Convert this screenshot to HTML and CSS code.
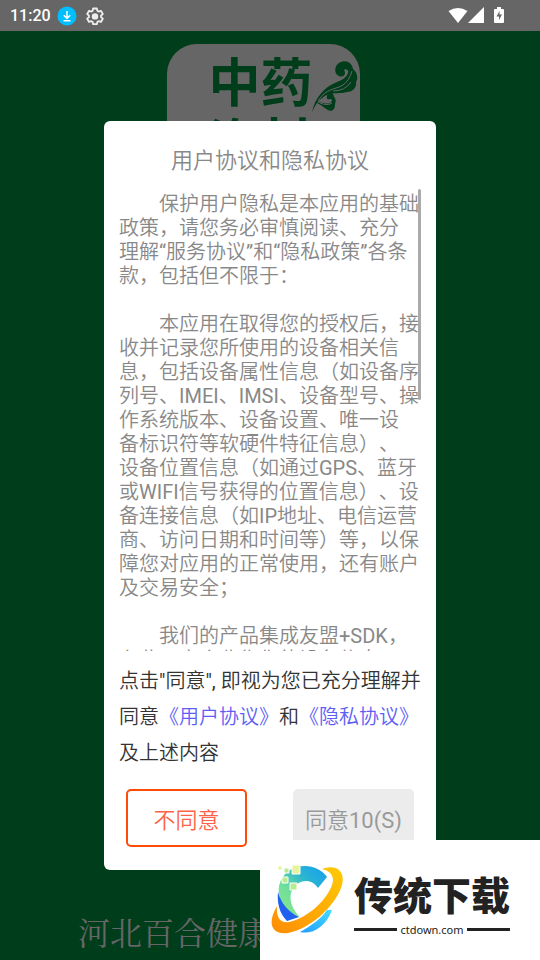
FILE: index.html
```html
<!DOCTYPE html>
<html lang="zh-CN">
<head>
    <meta charset="UTF-8">
    <meta name="viewport" content="width=device-width, initial-scale=1.0">
    <title>用户协议和隐私协议</title>
    <link rel="stylesheet" href="styles.css">
</head>
<body>

    <header class="status-bar">
        <span class="clock">11:20</span>
        <svg class="status-icon" width="20" height="20" viewBox="0 0 20 20" aria-hidden="true">
            <circle cx="10" cy="10" r="9.5" fill="#00bfff"/>
            <path d="M10 5v7M6.8 9.2 10 12.4l3.2-3.2M6.5 14.7h7" fill="none" stroke="#fff" stroke-width="1.5"/>
        </svg>
        <svg class="status-icon gear" width="18" height="18" viewBox="0 0 24 24" aria-hidden="true">
            <path d="M9.5 2h5l.7 3.2 1.6.9 3.1-1 2.5 4.3-2.4 2.2v1.8l2.4 2.2-2.5 4.3-3.1-1-1.6.9-.7 3.2h-5l-.7-3.2-1.6-.9-3.1 1-2.5-4.3L4 13.4v-1.8L1.6 9.4l2.5-4.3 3.1 1 1.6-.9z" fill="none" stroke="#eee" stroke-width="2.4" stroke-linejoin="round"/>
            <circle cx="12" cy="12.5" r="4.3" fill="#eee"/>
        </svg>
        <div class="signals">
            <svg width="20" height="18" viewBox="0 0 20 18" aria-hidden="true">
                <path d="M10 16 .5 4Q10-2 19.500 4z" fill="#fff"/>
            </svg>
            <svg width="16" height="18" viewBox="0 0 16 18" aria-hidden="true">
                <path d="M0 16 16 0v16z" fill="#fff"/>
            </svg>
            <svg class="battery" width="10" height="18" viewBox="0 0 10 18" aria-hidden="true">
                <path d="M3 0h4v2h2q1 0 1 1v12q0 1-1 1H1q-1 0-1-1V3q0-1 1-1h2z" fill="#fff"/>
                <path d="M5.500 4 2.500 9.500H5V13l3-5.500H5.500z" fill="#666"/>
            </svg>
        </div>
    </header>

    <main class="splash">
        <div class="app-logo">
            <p class="app-name">中药<br>资材</p>
            <svg class="cloud" width="48" height="54" viewBox="0 0 48 54" aria-hidden="true">
                <path d="M1 52C4 38 13 27 26 22q9-3 11-9c1-3-2-5-4-3 3 4-1 8-5 6-5-2-5-10 0-13C34-1 41 2 42 9c5 4 5 10 3 13 1 6-4 10-9 10-7 2-14 0-20 3C9 38 4 45 1 52z"/>
                <path d="M6 43c5-2 9 2 13 0 3-2 2-4 0-4-2 1-4 0-3-3 1-5 7-4 7 1 3 3 1 6 1 8 0 5-4 7-7 5-4-2-6-5-11-7z"/>
                <path class="vein" d="M7 41C15 28 24 30 32 25q6-4 9-14M22 31q12 0 18-9M9 43q8 3 12 0"/>
            </svg>
        </div>
        <p class="company">河北百合健康科技有限公司</p>
    </main>

    <div class="overlay">
        <section class="dialog" role="dialog" aria-labelledby="dialogTitle">
            <h1 id="dialogTitle">用户协议和隐私协议</h1>
            <div class="policy">
                <p>　　保护用户隐私是本应用的基础<br>政策，请您务必审慎阅读、充分<br>理解“服务协议”和“隐私政策”各条<br>款，包括但不限于：</p>
                <p>　　本应用在取得您的授权后，接<br>收并记录您所使用的设备相关信<br>息，包括设备属性信息（如设备序<br>列号、IMEI、IMSI、设备型号、操<br>作系统版本、设备设置、唯一设<br>备标识符等软硬件特征信息）、<br>设备位置信息（如通过GPS、蓝牙<br>或WIFI信号获得的位置信息）、设<br>备连接信息（如IP地址、电信运营<br>商、访问日期和时间等）等，以保<br>障您对应用的正常使用，还有账户<br>及交易安全；</p>
                <p>　　我们的产品集成友盟+SDK，<br>在此，它会收集您的设备信息</p>
                <span class="scroll-thumb"></span>
            </div>
            <p class="consent">点击"同意", 即视为您已充分理解并同意<a href="#user">《用户协议》</a>和<a href="#privacy">《隐私协议》</a>及上述内容</p>
            <div class="actions">
                <button type="button" class="decline">不同意</button>
                <button type="button" class="agree" disabled>同意10(S)</button>
            </div>
        </section>
    </div>

    <aside class="watermark">
        <svg class="watermark-logo" width="74" height="70" viewBox="0 0 74 70" aria-hidden="true">
            <defs>
                <linearGradient id="arc" x1="0" y1="1" x2="1" y2="0">
                    <stop offset="0" stop-color="#8ce88a"/>
                    <stop offset=".35" stop-color="#6fdf9a"/>
                    <stop offset=".65" stop-color="#2bb5d0"/>
                    <stop offset="1" stop-color="#149cf5"/>
                </linearGradient>
                <linearGradient id="ring" x1="0" y1="1" x2="1" y2="0">
                    <stop offset="0" stop-color="#ff8c05"/>
                    <stop offset="1" stop-color="#ffcb05"/>
                </linearGradient>
                <linearGradient id="tail" x1="0" y1="1" x2="1" y2="0">
                    <stop offset="0" stop-color="#249cff"/>
                    <stop offset="1" stop-color="#42dcff"/>
                </linearGradient>
            </defs>
            <path d="M30 52C16 48 7 35 9 21 12 8 22 1 35 1c9 0 17 4 22 11L48 23C43 15 34 14 27 19c-9 7-9 21 3 33z" fill="url(#arc)"/>
            <path d="M8 27c3 11 10 20 21 25l-12 4C9 48 7 37 8 27z" fill="#2260ee"/>
            <path d="M30 67c12 3 26-5 32-22h-5C51 54 42 60 30 67z" fill="url(#tail)"/>
            <path d="M52 4c15-6 25 3 19 19C64 42 40 64 18 68 1 70-3 58 7 41c-1 13 4 19 16 15 18-6 34-22 39-36 3-8-1-14-10-16z" fill="url(#ring)"/>
            <g stroke="#fff">
                <path d="M8 1h4v4H8z" fill="#e5f39a"/>
                <path d="M14 3h5v5h-5zM12 12h6v6h-6zM20 18h7v7h-7z" fill="#b9eb91"/>
                <path d="M22 0h8v9h-8z" fill="#e5f39a"/>
            </g>
        </svg>
        <div class="watermark-text">
            <strong>传统下载</strong>
            <span class="site">ctdown.com</span>
        </div>
    </aside>

</body>
</html>
```
FILE: styles.css
```css
* {
    box-sizing: border-box;
}
body {
    font-family: Roboto, "Noto Sans CJK SC DemiLight", "Noto Sans CJK SC", sans-serif;
    text-spacing-trim: space-all;
    display: flex;
    flex-direction: column;
    min-height: 100vh;
    margin: 0;
    background-color: #003d1b;
}
p, h1 {
    margin: 0;
    font-weight: normal;
}
.status-bar {
    display: flex;
    align-items: center;
    height: 31px;
    padding: 0 36px 0 10px;
    background-color: #666;
    color: #fff;
}
.clock {
    font-size: 16px;
    font-weight: 500;
    margin-right: 6px;
}
.gear {
    margin-left: 9px;
}
.signals {
    display: flex;
    margin-left: auto;
}
.battery {
    margin-left: 10px;
}
.splash {
    flex: 1;
    display: flex;
    flex-direction: column;
    align-items: center;
    justify-content: space-between;
    padding: 13px 0 3px;
}
.app-logo {
    display: flex;
    width: 193px;
    height: 193px;
    margin-right: 14px;
    padding: 6px 2px 0 42px;
    border-radius: 30px;
    background-color: #666;
    color: #003d1b;
}
.app-name {
    flex: none;
    font-family: "Noto Sans CJK SC", sans-serif;
    font-size: 52px;
    font-weight: 700;
    line-height: 60px;
    white-space: nowrap;
}
.cloud {
    flex: none;
    margin: 10px 0 0 -2px;
    fill: #003d1b;
}
.vein {
    fill: none;
    stroke: #666;
}
.company {
    font-family: "Liberation Serif", "Noto Serif CJK SC", "Noto Sans CJK SC", serif;
    font-size: 32px;
    line-height: 46px;
    color: #666;
}
.overlay {
    position: absolute;
    inset: 31px 0 0;
    display: flex;
    align-items: center;
    justify-content: center;
}
.dialog {
    width: 332px;
    padding: 25px 15px 23px;
    border-radius: 6px;
    background-color: #fff;
}
.dialog h1 {
    margin-bottom: 13px;
    font-size: 22px;
    line-height: 30px;
    text-align: center;
    color: #888;
}
.policy {
    position: relative;
    height: 462px;
    overflow: hidden;
    font-size: 20px;
    line-height: 24px;
    color: #888;
    white-space: nowrap;
}
.policy p {
    margin: 3px 0 24px;
}
.scroll-thumb {
    position: absolute;
    top: 0;
    right: 0;
    width: 3px;
    height: 211px;
    border-radius: 2px;
    background-color: #aaa;
}
.consent {
    margin-top: 12px;
    font-size: 20px;
    line-height: 36px;
    color: #333;
}
.consent a {
    color: #5e5ef5;
    text-decoration: none;
}
.actions {
    display: flex;
    justify-content: space-between;
    padding: 0 7px;
    margin-top: 18px;
}
button {
    width: 121px;
    height: 58px;
    padding: 0;
    border: 0;
    border-radius: 5px;
    font-family: inherit;
    font-size: 22px;
}
.decline {
    border: 2px solid #ff4a0a;
    background-color: #fff;
    color: #ff6347;
}
.agree {
    background-color: #ececec;
    color: #999;
}
.watermark {
    position: absolute;
    right: 0;
    bottom: 0;
    display: flex;
    align-items: center;
    gap: 10px;
    width: 280px;
    height: 120px;
    padding-left: 10px;
    background-color: #fff;
    color: #222;
}
.watermark-logo {
    flex: none;
}
.watermark-text {
    display: flex;
    flex-direction: column;
    gap: 6px;
    padding-top: 7px;
}
.watermark strong {
    font-family: "Noto Sans CJK SC", sans-serif;
    font-size: 39px;
    font-weight: 900;
    line-height: 46px;
}
.site {
    display: flex;
    align-items: center;
    gap: 3px;
    font-family: "Noto Sans", sans-serif;
    font-size: 11px;
    line-height: 16px;
}
.site::before, .site::after {
    content: "";
    flex: 1;
    height: 3px;
    background-color: #222;
}
```
